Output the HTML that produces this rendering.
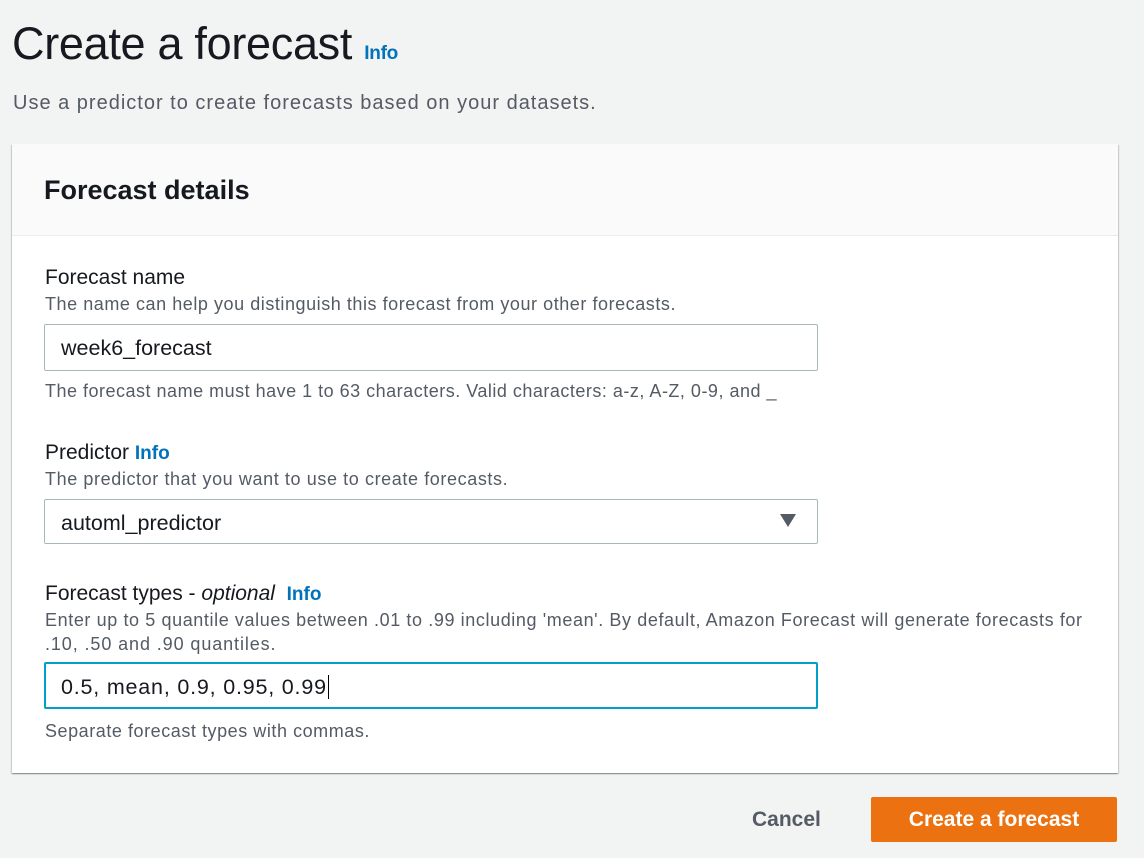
<!DOCTYPE html>
<html><head><meta charset="utf-8"><style>
*{margin:0;padding:0;box-sizing:border-box}
body{width:1144px;height:858px;background:#f2f3f3;font-family:"Liberation Sans",sans-serif;color:#16191f;position:relative;overflow:hidden}
.a{position:absolute;white-space:nowrap}
h1{position:absolute;left:12px;top:18px;font-size:45px;font-weight:400;color:#16191f;letter-spacing:-0.3px}
.info{color:#0073bb;font-weight:700}
.sub{left:13px;top:92px;font-size:20px;color:#545b64;letter-spacing:1px}
.panel{position:absolute;left:12px;top:144px;width:1106px;height:629px;background:#fff;box-shadow:0 1px 1px 0 rgba(0,28,36,.3),1px 1px 1px 0 rgba(0,28,36,.15),-1px 1px 1px 0 rgba(0,28,36,.15)}
.hdr{position:absolute;left:0;top:0;width:100%;height:92px;background:#fafafa;border-bottom:1px solid #eaeded}
.lbl{font-size:21px;color:#16191f}
.d{font-size:18px;color:#545b64;letter-spacing:0.55px}
.inp{position:absolute;left:44px;width:774px;height:47px;border:1px solid #aab7b8;border-radius:2px;background:#fff;font-size:21.5px;padding:11px 0 0 16px;color:#16191f}
</style></head><body>
<h1>Create a forecast <span class="info" style="font-size:19px">Info</span></h1>
<div class="a sub">Use a predictor to create forecasts based on your datasets.</div>
<div class="panel"><div class="hdr"><div class="a" style="left:32px;top:31px;font-size:27px;font-weight:700">Forecast details</div></div></div>
<div class="a lbl" style="left:45px;top:266px">Forecast name</div>
<div class="a d" style="left:45px;top:294px">The name can help you distinguish this forecast from your other forecasts.</div>
<div class="inp" style="top:324px">week6_forecast</div>
<div class="a d" style="left:45px;top:381px;letter-spacing:0.5px">The forecast name must have 1 to 63 characters. Valid characters: a-z, A-Z, 0-9, and _</div>
<div class="a lbl" style="left:45px;top:441px">Predictor <span class="info" style="font-size:19px">Info</span></div>
<div class="a d" style="left:45px;top:469px;letter-spacing:0.6px">The predictor that you want to use to create forecasts.</div>
<div class="inp" style="top:499px;height:45px">automl_predictor</div>
<svg class="a" style="left:780px;top:514px" width="16" height="14"><path d="M0 0H16L8 13Z" fill="#545b64"/></svg>
<div class="a lbl" style="left:45px;top:582px">Forecast types - <i>optional</i> &nbsp;<span class="info" style="font-size:19px">Info</span></div>
<div class="a d" style="left:45px;top:610px;letter-spacing:0.6px">Enter up to 5 quantile values between .01 to .99 including 'mean'. By default, Amazon Forecast will generate forecasts for</div>
<div class="a d" style="left:45px;top:634px;letter-spacing:0.9px">.10, .50 and .90 quantiles.</div>
<div class="inp" style="top:662px;border:2px solid #00a1c9;padding-left:15px;letter-spacing:0.8px">0.5, mean, 0.9, 0.95, 0.99<span style="border-left:1px solid #000;margin-left:1px"></span></div>
<div class="a d" style="left:45px;top:721px">Separate forecast types with commas.</div>
<div class="a" style="left:752px;top:808px;font-size:21px;font-weight:700;color:#545b64">Cancel</div>
<div class="a" style="left:871px;top:797px;width:246px;height:45px;background:#ec7211;border-radius:2px;color:#fff;font-size:21px;font-weight:700;text-align:center;line-height:45px">Create a forecast</div>
</body></html>
